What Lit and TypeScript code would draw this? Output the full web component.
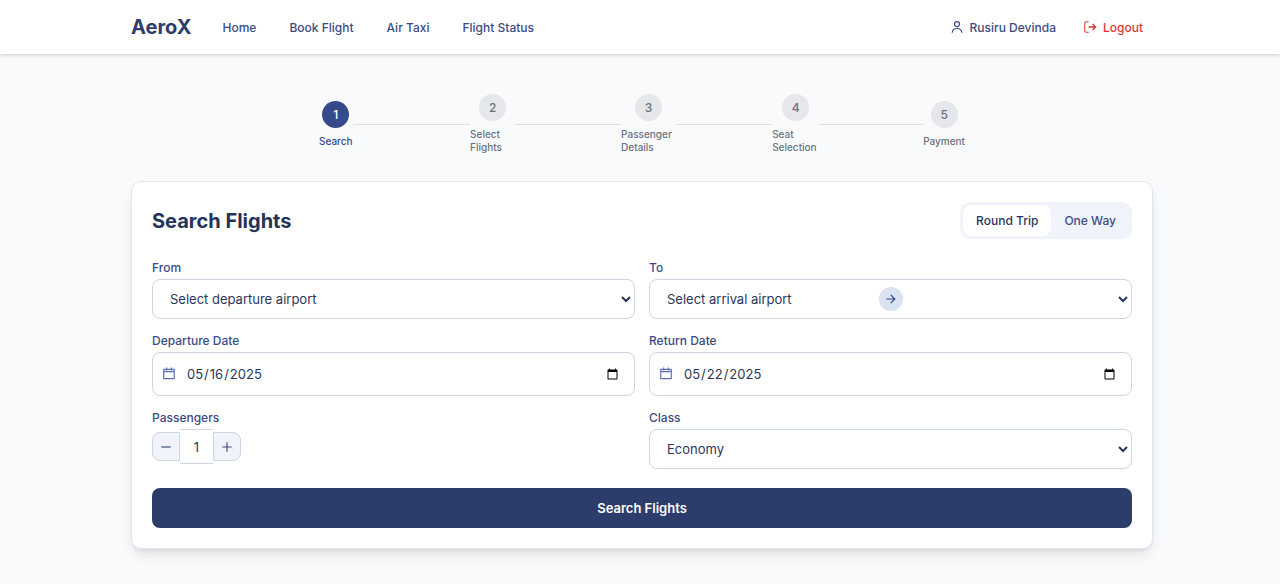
import { LitElement, html, css, svg } from "lit";
import { customElement, state } from "lit/decorators.js";
import { classMap } from "lit/directives/class-map.js";

const STEPS = ["Search", "Select Flights", "Passenger Details", "Seat Selection", "Payment"];
const LINKS = ["Home", "Book Flight", "Air Taxi", "Flight Status"];
const AIRPORTS = ["Colombo (CMB)", "Dubai (DXB)", "London (LHR)", "Singapore (SIN)"];

const icon = (body: unknown, size = 14) => html`<svg
  class="icon" width=${size} height=${size} viewBox="0 0 24 24" aria-hidden="true"
>${body}</svg>`;

const userIcon = svg`<g fill="none" stroke="currentColor" stroke-width="2"><circle cx="12" cy="7" r="4.300"/><path d="M3.800 22C4 17 7 14.500 12 14.500S20 17 20.200 22"/></g>`;
const logoutIcon = svg`<path fill="none" stroke="currentColor" stroke-width="1.800" stroke-linejoin="round" stroke-linecap="round" d="M9 21H5.500Q3 21 3 18.500V5.500Q3 3 5.500 3H9"/><path fill="none" stroke="currentColor" stroke-width="2.400" d="M9.500 12H21M16.500 7L21.500 12L16.500 17"/>`;
const calendarIcon = svg`<path fill="currentColor" d="M9 1v2h6V1h2v2h4a1 1 0 0 1 1 1v16a1 1 0 0 1-1 1H3a1 1 0 0 1-1-1V4a1 1 0 0 1 1-1h4V1h2zm11 8H4v10h16V9zM7 5H4v2h16V5h-3v1h-2V5H9v1H7V5z"/>`;
const arrowIcon = svg`<path fill="currentColor" d="M16.172 11l-5.364-5.364 1.414-1.414L20 12l-7.778 7.778-1.414-1.414L16.172 13H4v-2z"/>`;
const minusIcon = svg`<path fill="currentColor" d="M4 11h16v2H4z"/>`;
const plusIcon = svg`<path fill="currentColor" d="M11 11V4h2v7h7v2h-7v7h-2v-7H4v-2z"/>`;

@customElement("app-root")
export class AppRoot extends LitElement {
  @state() private roundTrip = true;
  @state() private passengers = 1;

  static styles = css`
    :host {
      display: block;
      min-height: 100vh;
      background: #f9fafc;
      color: #293659;
      font-family: Inter, "Liberation Sans", sans-serif;
      font-size: 12px;
      line-height: 17px;
    }
    * { box-sizing: border-box; }
    button, input, select { font: inherit; color: inherit; margin: 0; }
    button { cursor: pointer; border: 0; padding: 0; }
    a { color: inherit; text-decoration: none; }
    .icon { display: block; flex: none; }

    .header {
      background: #fff;
      box-shadow: 0 1px 4px rgba(0, 0, 0, 0.2);
      padding: 0 137px 0 131px;
      height: 54px;
      display: flex;
      align-items: center;
      justify-content: space-between;
      font-weight: 500;
      color: #3b4c85;
    }
    .left, .links, .account, .who { display: flex; align-items: center; }
    .left { gap: 31px; }
    .brand { font-size: 20px; line-height: 28px; font-weight: 700; color: #2d3d6b; }
    .links { gap: 33px; }
    .account { gap: 27px; }
    .who { gap: 6px; }
    .logout { color: #d93636; background: none; }

    .page { padding: 40px 127px 35px 131px; }
    .steps {
      list-style: none;
      display: flex;
      align-items: center;
      max-width: 646px;
      margin: 0 auto 27px;
      padding: 0;
      color: #6b7280;
    }
    .step { display: flex; align-items: center; flex: 1 1 0; }
    .step:last-child { flex: none; }
    .step-item { display: flex; flex-direction: column; align-items: center; gap: 7px; }
    .dot {
      width: 27px;
      height: 27px;
      border-radius: 50%;
      background: #e5e7eb;
      display: grid;
      place-items: center;
      font-weight: 500;
    }
    .step-label { font-size: 10px; line-height: 13px; font-weight: 500; }
    .line { width: 100%; height: 1px; background: #dcdfe5; }
    .active .dot { background: #354a8a; color: #fff; }
    .active .step-label { color: #354a8a; }

    .card {
      background: #fff;
      border: 1px solid #dfe5ee;
      border-radius: 10px;
      padding: 20px;
      box-shadow: 0 8px 13px -3px rgba(0, 0, 0, 0.1), 0 3px 5px -2px rgba(0, 0, 0, 0.08);
    }
    .card-head { display: flex; align-items: center; justify-content: space-between; margin-bottom: 20px; }
    .title { margin: 0; font-size: 20px; line-height: 28px; font-weight: 700; color: #25335a; }
    .toggle { display: flex; background: #f0f3f9; border-radius: 10px; padding: 3px; }
    .option {
      background: none;
      border-radius: 8px;
      padding: 7px 13px;
      font-weight: 500;
      color: #3b4c85;
    }
    .chosen { background: #fff; color: #293659; }

    .form { display: grid; grid-template-columns: 1fr 1fr; gap: 13px 14px; align-items: start; }
    .field { display: flex; flex-direction: column; gap: 3px; }
    .label { font-weight: 500; color: #3b4c85; }
    .wrap { position: relative; }
    .control {
      display: block;
      width: 100%;
      height: 40px;
      border: 1px solid #ccd6e4;
      border-radius: 8px;
      background: #fff;
      padding: 0 13px;
      font-size: 13px;
      outline-color: #354a8a;
    }
    .date { height: 44px; padding: 0 13px 0 33px; }
    .lead { position: absolute; left: 10px; top: 15px; color: #5a70b0; pointer-events: none; }
    .swap {
      position: absolute;
      left: 50%;
      top: 50%;
      transform: translate(-50%, -50%);
      width: 24px;
      height: 24px;
      border-radius: 50%;
      background: #d9e2f0;
      color: #354a8a;
      display: grid;
      place-items: center;
    }
    .counter { display: flex; align-items: center; }
    .bump {
      width: 28px;
      height: 29px;
      display: grid;
      place-items: center;
      background: #f0f3f9;
      border: 1px solid #ccd6e4;
      color: #3b4c85;
    }
    .less { border-radius: 8px 0 0 8px; }
    .more { border-radius: 0 8px 8px 0; }
    .count {
      width: 33px;
      height: 35px;
      border: solid #ccd6e4;
      border-width: 1px 0;
      border-radius: 0;
      background: #fff;
      padding: 0;
      text-align: center;
      font-size: 13px;
      appearance: textfield;
    }
    .count::-webkit-inner-spin-button { appearance: none; margin: 0; }
    .submit {
      grid-column: 1 / -1;
      margin-top: 6px;
      height: 40px;
      border-radius: 8px;
      background: #2d3d6b;
      color: #fff;
      font-size: 13px;
      font-weight: 600;
    }
  `;

  private bump(by: number) {
    this.passengers = Math.min(9, Math.max(1, this.passengers + by));
  }

  private airportField(id: string, label: string, hint: string, extra: unknown = "") {
    return html`<div class="field">
      <label class="label" for=${id}>${label}</label>
      <div class="wrap">
        <select class="control" id=${id}>
          <option value="">${hint}</option>
          ${AIRPORTS.map((a) => html`<option>${a}</option>`)}
        </select>
        ${extra}
      </div>
    </div>`;
  }

  private dateField(id: string, label: string, value: string) {
    return html`<div class="field">
      <label class="label" for=${id}>${label}</label>
      <div class="wrap">
        <input class="control date" id=${id} type="date" .value=${value} />
        <span class="lead">${icon(calendarIcon)}</span>
      </div>
    </div>`;
  }

  render() {
    return html`
      <header class="header">
        <div class="left">
          <a class="brand" href="#">AeroX</a>
          <nav class="links">${LINKS.map((l) => html`<a href="#">${l}</a>`)}</nav>
        </div>
        <div class="account">
          <a class="who" href="#">${icon(userIcon)}<span>Rusiru Devinda</span></a>
          <button class="who logout">${icon(logoutIcon)}<span>Logout</span></button>
        </div>
      </header>
      <main class="page">
        <ol class="steps">
          ${STEPS.map((s, i) => html`<li class=${classMap({ step: true, active: i === 0 })}>
            <div class="step-item"><span class="dot">${i + 1}</span><span class="step-label">${s}</span></div>
            ${i < STEPS.length - 1 ? html`<div class="line"></div>` : ""}
          </li>`)}
        </ol>
        <section class="card">
          <div class="card-head">
            <h1 class="title">Search Flights</h1>
            <div class="toggle">
              <button class=${classMap({ option: true, chosen: this.roundTrip })}
                @click=${() => (this.roundTrip = true)}>Round Trip</button>
              <button class=${classMap({ option: true, chosen: !this.roundTrip })}
                @click=${() => (this.roundTrip = false)}>One Way</button>
            </div>
          </div>
          <form class="form" @submit=${(e: Event) => e.preventDefault()}>
            ${this.airportField("from", "From", "Select departure airport")}
            ${this.airportField("to", "To", "Select arrival airport",
              html`<button class="swap" type="button" aria-label="Swap airports">${icon(arrowIcon)}</button>`)}
            ${this.dateField("depart", "Departure Date", "2025-05-16")}
            ${this.dateField("return", "Return Date", "2025-05-22")}
            <div class="field">
              <label class="label" for="passengers">Passengers</label>
              <div class="counter">
                <button class="bump less" type="button" aria-label="Fewer passengers"
                  @click=${() => this.bump(-1)}>${icon(minusIcon)}</button>
                <input class="count" id="passengers" type="number" min="1" max="9" .value=${String(this.passengers)} />
                <button class="bump more" type="button" aria-label="More passengers"
                  @click=${() => this.bump(1)}>${icon(plusIcon)}</button>
              </div>
            </div>
            <div class="field">
              <label class="label" for="cabin">Class</label>
              <select class="control" id="cabin">
                <option>Economy</option>
                <option>Business</option>
                <option>First Class</option>
              </select>
            </div>
            <button class="submit" type="submit">Search Flights</button>
          </form>
        </section>
      </main>
    `;
  }
}
